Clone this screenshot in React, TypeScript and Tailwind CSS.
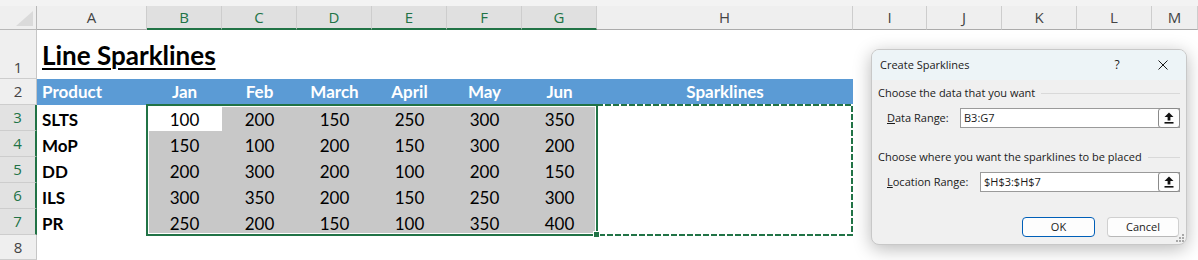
const colStart = [
  "",
  "col-start-1",
  "col-start-2",
  "col-start-3",
  "col-start-4",
  "col-start-5",
  "col-start-6",
  "col-start-7",
  "col-start-8",
  "col-start-9",
  "col-start-10",
  "col-start-11",
  "col-start-12",
  "col-start-13",
  "col-start-14",
];
const rowStart = [
  "",
  "row-start-1",
  "row-start-2",
  "row-start-3",
  "row-start-4",
  "row-start-5",
  "row-start-6",
  "row-start-7",
  "row-start-8",
  "row-start-9",
];

const letters = ["A", "B", "C", "D", "E", "F", "G", "H", "I", "J", "K", "L", "M"];
const months = ["Jan", "Feb", "March", "April", "May", "Jun"];
const data: [string, number[]][] = [
  ["SLTS", [100, 200, 150, 250, 300, 350]],
  ["MoP", [150, 100, 200, 150, 300, 200]],
  ["DD", [200, 300, 200, 100, 200, 150]],
  ["ILS", [300, 350, 200, 150, 250, 300]],
  ["PR", [250, 200, 150, 100, 350, 400]],
];

const UploadIcon = () => (
  <svg width="10" height="12" viewBox="0 0 10 12" fill="#111">
    <path d="M5 0.5 L9.5 5 H6.4 V8.6 H3.6 V5 H0.5 Z" />
    <rect x="0.5" y="10" width="9" height="1.6" />
  </svg>
);

const RangeInput = ({ value, width }: { value: string; width: string }) => (
  <div className={`flex h-[20px] items-center border border-[#9a9a9a] bg-white ${width}`}>
    <span className="pl-[3px]">{value}</span>
    <div className="-my-px -mr-px ml-auto flex h-[20px] w-[22px] items-center justify-center rounded-[3px] border border-[#8a8a8a] bg-[#fdfdfd]">
      <UploadIcon />
    </div>
  </div>
);

const GroupLabel = ({ text }: { text: string }) => (
  <div className="flex items-center leading-[16px]">
    <span>{text}</span>
    <div className="ml-[6px] h-px flex-1 bg-[#d9d9d9]" />
  </div>
);

const Dialog = () => (
  <div className="absolute left-[871px] top-[49px] w-[316px] overflow-hidden rounded-[8px] border border-[#c8c8c8] bg-[#f0f0f0] font-['Open_Sans',sans-serif] text-[11px] text-[#1a1a1a] shadow-[0_4px_18px_rgba(0,0,0,0.28)]">
    <div className="flex h-[30px] items-center bg-[#edf4f7] pl-[8px]">
      <span>Create Sparklines</span>
      <span className="ml-auto w-[20px] text-center text-[12px]">?</span>
      <div className="ml-[26px] mr-[13px] flex w-[20px] justify-center">
        <svg width="10" height="10" viewBox="0 0 10 10" stroke="#1a1a1a" strokeWidth="1">
          <path d="M0.5 0.5 L9.5 9.5 M9.5 0.5 L0.5 9.5" />
        </svg>
      </div>
    </div>
    <div className="flex flex-col px-[6px] pb-[7px] pt-[5px]">
      <GroupLabel text="Choose the data that you want" />
      <div className="mt-[7px] flex items-center pl-[9px]">
        <span>
          <span className="underline">D</span>ata Range:
        </span>
        <div className="ml-auto">
          <RangeInput value="B3:G7" width="w-[220px]" />
        </div>
      </div>
      <div className="mt-[21px]">
        <GroupLabel text="Choose where you want the sparklines to be placed" />
      </div>
      <div className="mt-[7px] flex items-center pl-[9px]">
        <span>
          <span className="underline">L</span>ocation Range:
        </span>
        <div className="ml-auto">
          <RangeInput value="$H$3:$H$7" width="w-[200px]" />
        </div>
      </div>
      <div className="mt-[25px] flex justify-end gap-[12px] pr-[1px]">
        <button className="flex h-[20px] w-[73px] items-center justify-center rounded-[4px] border border-[#005fb8] bg-[#fdfdfd]">
          OK
        </button>
        <button className="flex h-[20px] w-[72px] items-center justify-center rounded-[4px] border border-[#d0d0d0] border-b-[#b8b8b8] bg-[#fdfdfd]">
          Cancel
        </button>
      </div>
    </div>
    <svg className="absolute bottom-[2px] right-[2px]" width="9" height="9" viewBox="0 0 9 9" fill="#a8a8a8">
      <rect x="7" y="1" width="2" height="2" />
      <rect x="4" y="4" width="2" height="2" />
      <rect x="7" y="4" width="2" height="2" />
      <rect x="1" y="7" width="2" height="2" />
      <rect x="4" y="7" width="2" height="2" />
      <rect x="7" y="7" width="2" height="2" />
    </svg>
  </div>
);

const App = () => {
  return (
    <div className="relative h-[260px] w-[1198px] overflow-hidden bg-white">
      <div className="h-[6px] bg-[#f3f3f3]" />
      <div className="grid grid-cols-[37px_110px_75px_75px_75px_75px_75px_75px_256px_74px_75px_75px_75px_1fr] grid-rows-[24px_49px_26px_26px_26px_26px_26px_26px_25px]">
        {/* corner */}
        <div className="col-start-1 row-start-1 flex items-end justify-end border-b border-r border-[#b8b8b8] bg-[#efefef] p-[3px]">
          <svg width="17" height="15" viewBox="0 0 17 15">
            <path d="M17 0 V15 H0 Z" fill="#dadada" />
          </svg>
        </div>

        {/* column headers */}
        {letters.map((l, i) => {
          const sel = i >= 1 && i <= 6;
          return (
            <div
              key={l}
              className={`${colStart[i + 2]} row-start-1 flex items-center justify-center border-r border-r-[#cdcdcd] font-['Open_Sans',sans-serif] text-[15px] ${
                sel
                  ? "border-b-2 border-b-[#217346] bg-[#e0e0e0] text-[#217346]"
                  : "border-b border-b-[#ababab] bg-[#efefef] text-[#444]"
              }`}>
              {l}
            </div>
          );
        })}

        {/* row headers */}
        {[1, 2, 3, 4, 5, 6, 7, 8].map((r) => {
          const sel = r >= 3 && r <= 7;
          return (
            <div
              key={r}
              className={`col-start-1 ${rowStart[r + 1]} flex justify-center border-b border-b-[#cdcdcd] font-['Open_Sans',sans-serif] text-[15px] ${
                r === 1 ? "items-end pb-0" : "items-center"
              } ${
                sel
                  ? "border-r-2 border-r-[#217346] bg-[#e2e2e2] text-[#217346]"
                  : "border-r border-r-[#c6c6c6] bg-[#efefef] text-[#444]"
              }`}>
              {r}
            </div>
          );
        })}

        {/* title */}
        <div className="col-start-2 row-start-2 flex items-end whitespace-nowrap pb-[11px] pl-[5px] font-['Lato',sans-serif] text-[26px] font-bold leading-none text-black underline decoration-2 underline-offset-[3px]">
          Line Sparklines
        </div>

        {/* header row */}
        <div className="col-start-2 row-start-3 flex items-center bg-[#5b9bd5] pl-[5px] font-['Lato',sans-serif] text-[17px] font-bold text-white">
          Product
        </div>
        {months.map((m, i) => (
          <div
            key={m}
            className={`${colStart[i + 3]} row-start-3 flex items-center justify-center bg-[#5b9bd5] font-['Lato',sans-serif] text-[17px] font-bold text-white`}>
            {m}
          </div>
        ))}
        <div className="col-start-9 row-start-3 flex items-center justify-center bg-[#5b9bd5] font-['Lato',sans-serif] text-[17px] font-bold text-white">
          Sparklines
        </div>

        {/* data rows */}
        {data.map(([name, vals], ri) => (
          <div key={name} className="contents">
            <div
              className={`col-start-2 ${rowStart[ri + 4]} flex items-center pl-[5px] pt-[4px] font-['Lato',sans-serif] text-[17px] font-bold text-black`}>
              {name}
            </div>
            {vals.map((v, ci) => (
              <div
                key={ci}
                className={`${colStart[ci + 3]} ${rowStart[ri + 4]} flex items-center justify-center pt-[4px] font-['Lato',sans-serif] text-[17px] text-black ${
                  ri === 0 && ci === 0 ? "bg-white" : "bg-[#c8c8c8]"
                }`}>
                {v}
              </div>
            ))}
          </div>
        ))}

        {/* selection B3:G7 */}
        <div className="pointer-events-none relative col-start-3 col-end-9 row-start-4 row-end-9 -m-px border-2 border-[#217346]">
          <div className="h-full w-full border border-white" />
          <div className="absolute -bottom-[4px] -right-[4px] h-[7px] w-[7px] border border-white bg-[#217346]" />
        </div>

        {/* marching ants H3:H7 */}
        <div className="pointer-events-none col-start-9 row-start-4 row-end-9 -my-px -ml-px">
          <svg width="257" height="132" viewBox="0 0 257 132">
            <rect x="1" y="1" width="255" height="130" fill="none" stroke="#fff" strokeWidth="2" />
            <rect x="1" y="1" width="255" height="130" fill="none" stroke="#217346" strokeWidth="2" strokeDasharray="6 2" />
          </svg>
        </div>
      </div>

      <Dialog />
    </div>
  );
};

export default App;
